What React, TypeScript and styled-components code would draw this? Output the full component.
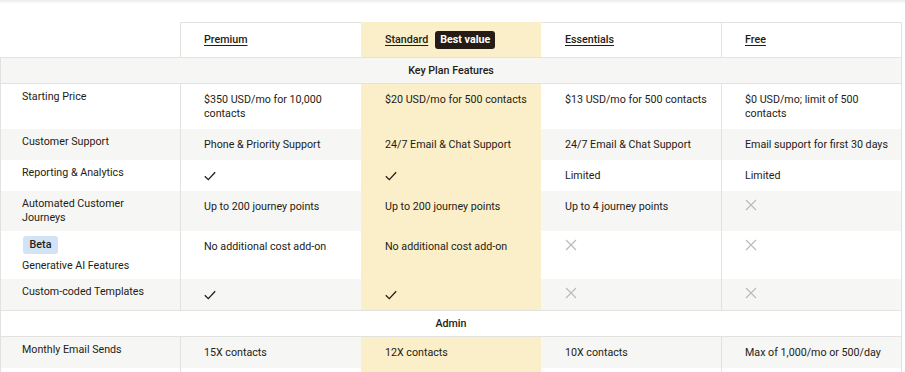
import React from "react";
import styled, { createGlobalStyle } from "styled-components";

const INK = "#241c15";
const LINE = "#e2e2e0";
const STRIPE = "#f6f6f4";
const HIGHLIGHT = "#fbefca";

const GlobalStyle = createGlobalStyle`
  * { box-sizing: border-box; }
  body {
    margin: 0;
    background: #ffffff;
    font-family: Roboto, "Liberation Sans", Arial, sans-serif;
    color: ${INK};
  }
`;

const Page = styled.div`
  width: 905px;
  height: 372px;
  overflow: hidden;
  background: linear-gradient(#ececec 0, #ffffff 4px);
  padding-top: 22px;
`;

const Table = styled.div`
  width: 902px;
  font-size: 10.7px;
  line-height: 14px;
`;

const Grid = styled.div<{ $striped?: boolean }>`
  display: grid;
  grid-template-columns: 180px 181px 180px 180px 181px;
  background: ${(p) => (p.$striped ? STRIPE : "#ffffff")};
`;

const HeaderRow = styled(Grid)`
  height: 35px;
`;

const HeaderCell = styled.div<{ $highlight?: boolean; $noBorder?: boolean; $last?: boolean }>`
  display: flex;
  align-items: center;
  gap: 7px;
  padding: 0 4px 1px 23px;
  background: ${(p) => (p.$highlight ? HIGHLIGHT : "transparent")};
  border-top: 1px solid ${(p) => (p.$highlight ? HIGHLIGHT : LINE)};
  border-left: 1px solid ${(p) => (p.$noBorder || p.$highlight ? "transparent" : LINE)};
  border-right: ${(p) => (p.$last ? `1px solid ${LINE}` : "none")};
`;

const EmptyHead = styled.div``;

const PlanLink = styled.a`
  color: ${INK};
  font-weight: 500;
  text-decoration: underline;
  text-underline-offset: 2px;
  cursor: pointer;
`;

const Badge = styled.span`
  display: inline-flex;
  align-items: center;
  height: 18px;
  padding: 0 5px;
  border-radius: 3px;
  background: ${INK};
  color: #ffffff;
  font-weight: 700;
`;

const SectionRow = styled.div<{ $striped?: boolean }>`
  height: 27px;
  display: flex;
  align-items: center;
  justify-content: center;
  border: 1px solid ${LINE};
  background: ${(p) => (p.$striped ? STRIPE : "#ffffff")};
  font-weight: 500;
`;

const LabelCell = styled.div`
  padding: 6px 30px 6px 21px;
  border-left: 1px solid ${LINE};
`;

const Cell = styled.div<{ $highlight?: boolean; $noBorder?: boolean; $last?: boolean }>`
  padding: 9px 4px 8px 23px;
  background: ${(p) => (p.$highlight ? HIGHLIGHT : "transparent")};
  border-left: 1px solid ${(p) => (p.$noBorder || p.$highlight ? "transparent" : LINE)};
  border-right: ${(p) => (p.$last ? `1px solid ${LINE}` : "none")};
`;

const BetaTag = styled.span`
  display: inline-flex;
  align-items: center;
  justify-content: center;
  width: 35px;
  height: 18px;
  margin: -1px 0 5px 1px;
  border-radius: 3px;
  background: #d2e3f5;
  font-weight: 500;
`;

const LabelText = styled.div``;

const IconWrap = styled.span`
  display: inline-flex;
  height: 14px;
  align-items: center;
  vertical-align: top;
`;

const Check = () => (
  <IconWrap>
    <svg width="12" height="10" viewBox="0 0 12 10" fill="none">
      <path d="M0.8 5.2 L4.3 8.6 L11.2 1.2" stroke={INK} strokeWidth="1.3" />
    </svg>
  </IconWrap>
);

const Cross = () => (
  <IconWrap>
    <svg width="12" height="12" viewBox="0 0 12 12" fill="none" style={{ marginTop: -4 }}>
      <path d="M1 1 L11 11 M11 1 L1 11" stroke="#b9b9b7" strokeWidth="1.1" />
    </svg>
  </IconWrap>
);

type Value = string | "check" | "cross";

interface FeatureRow {
  label: string;
  beta?: boolean;
  values: Value[];
}

const plans = ["Premium", "Standard", "Essentials", "Free"];
const HIGHLIGHT_INDEX = 1;

const keyFeatures: FeatureRow[] = [
  {
    label: "Starting Price",
    values: [
      "$350 USD/mo for 10,000 contacts",
      "$20 USD/mo for 500 contacts",
      "$13 USD/mo for 500 contacts",
      "$0 USD/mo; limit of 500 contacts",
    ],
  },
  {
    label: "Customer Support",
    values: [
      "Phone & Priority Support",
      "24/7 Email & Chat Support",
      "24/7 Email & Chat Support",
      "Email support for first 30 days",
    ],
  },
  { label: "Reporting & Analytics", values: ["check", "check", "Limited", "Limited"] },
  {
    label: "Automated Customer Journeys",
    values: ["Up to 200 journey points", "Up to 200 journey points", "Up to 4 journey points", "cross"],
  },
  {
    label: "Generative AI Features",
    beta: true,
    values: ["No additional cost add-on", "No additional cost add-on", "cross", "cross"],
  },
  { label: "Custom-coded Templates", values: ["check", "check", "cross", "cross"] },
];

const adminFeatures: FeatureRow[] = [
  {
    label: "Monthly Email Sends",
    values: ["15X contacts", "12X contacts", "10X contacts", "Max of 1,000/mo or 500/day"],
  },
  { label: "Users", values: ["Unlimited", "5", "3", "1"] },
];

const renderValue = (v: Value) => {
  if (v === "check") return <Check />;
  if (v === "cross") return <Cross />;
  return v;
};

const Rows = ({ rows, startStriped }: { rows: FeatureRow[]; startStriped: boolean }) => (
  <>
    {rows.map((row, i) => (
      <Grid key={row.label} $striped={startStriped ? i % 2 === 0 : i % 2 === 1}>
        <LabelCell>
          {row.beta && <BetaTag>Beta</BetaTag>}
          <LabelText>{row.label}</LabelText>
        </LabelCell>
        {row.values.map((v, j) => (
          <Cell
            key={j}
            $highlight={j === HIGHLIGHT_INDEX}
            $noBorder={j === HIGHLIGHT_INDEX + 1}
            $last={j === row.values.length - 1}
          >
            {renderValue(v)}
          </Cell>
        ))}
      </Grid>
    ))}
  </>
);

export default function App() {
  return (
    <>
      <GlobalStyle />
      <Page>
        <Table>
          <HeaderRow>
            <EmptyHead />
            {plans.map((plan, j) => (
              <HeaderCell
                key={plan}
                $highlight={j === HIGHLIGHT_INDEX}
                $noBorder={j === HIGHLIGHT_INDEX + 1}
                $last={j === plans.length - 1}
              >
                <PlanLink>{plan}</PlanLink>
                {j === HIGHLIGHT_INDEX && <Badge>Best value</Badge>}
              </HeaderCell>
            ))}
          </HeaderRow>
          <SectionRow $striped>Key Plan Features</SectionRow>
          <Rows rows={keyFeatures} startStriped={false} />
          <SectionRow>Admin</SectionRow>
          <Rows rows={adminFeatures} startStriped />
        </Table>
      </Page>
    </>
  );
}
